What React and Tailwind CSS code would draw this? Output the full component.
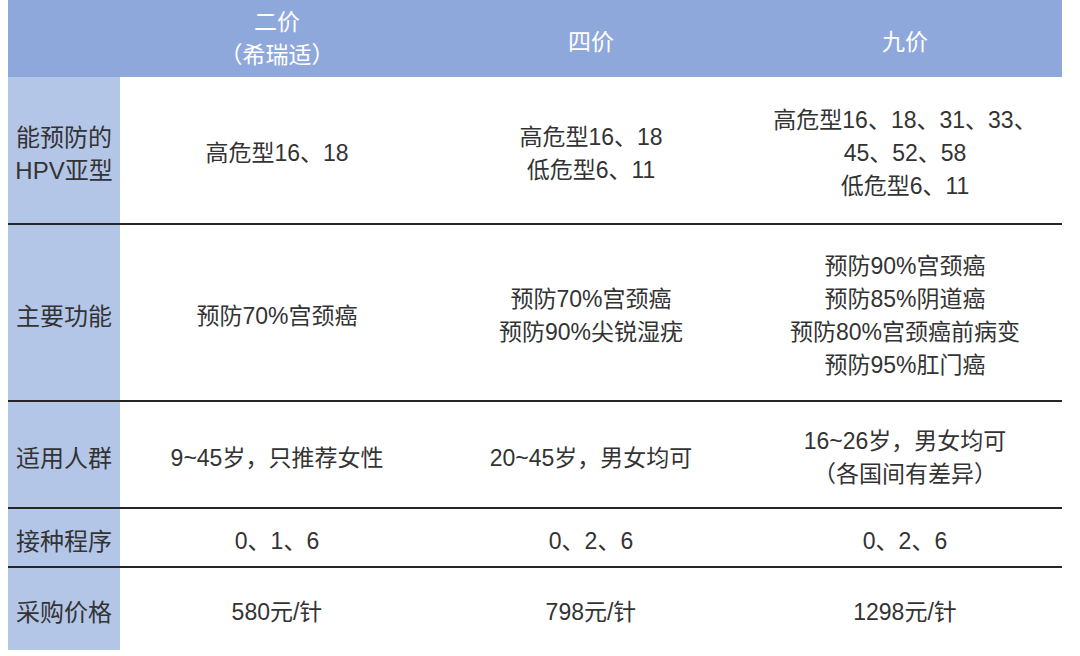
import React from 'react'

const rows = [
  {
    label: ['能预防的', 'HPV亚型'],
    h: 'h-[148px]',
    cells: [['高危型16、18'], ['高危型16、18', '低危型6、11'], ['高危型16、18、31、33、', '45、52、58', '低危型6、11']],
  },
  {
    label: ['主要功能'],
    h: 'h-[177px]',
    cells: [['预防70%宫颈癌'], ['预防70%宫颈癌', '预防90%尖锐湿疣'], ['预防90%宫颈癌', '预防85%阴道癌', '预防80%宫颈癌前病变', '预防95%肛门癌']],
  },
  {
    label: ['适用人群'],
    h: 'h-[107px]',
    cells: [['9~45岁，只推荐女性'], ['20~45岁，男女均可'], ['16~26岁，男女均可', '（各国间有差异）']],
  },
  {
    label: ['接种程序'],
    h: 'h-[59px]',
    cells: [['0、1、6'], ['0、2、6'], ['0、2、6']],
  },
  {
    label: ['采购价格'],
    h: 'h-[82px]',
    cells: [['580元/针'], ['798元/针'], ['1298元/针']],
    last: true,
  },
]

export default function App() {
  return (
    <div className="w-[1080px] h-[656px] bg-white pl-[8px] overflow-hidden"
      style={{ fontFamily: '"Liberation Sans", "Noto Sans CJK SC", sans-serif' }}>
      <div className="w-[1054px]">
        <div className="grid grid-cols-[112px_1fr_1fr_1fr] h-[77px] bg-[#8fa8dc] text-white text-[23px] leading-[33px]">
          <div></div>
          <div className="flex flex-col items-center justify-center">
            <span>二价</span>
            <span>（希瑞适）</span>
          </div>
          <div className="flex items-center justify-center pt-[7px]">四价</div>
          <div className="flex items-center justify-center pt-[7px]">九价</div>
        </div>
        {rows.map((r, i) => (
          <div key={i}
            className={`grid grid-cols-[112px_1fr_1fr_1fr] ${r.h} ${r.last ? '' : 'border-b-2 border-[#262626]'} leading-[33px] text-[#333333]`}>
            <div className="bg-[#b4c6e7] flex flex-col items-center justify-center pt-[7px] text-[24px]">
              {r.label.map((t, j) => <span key={j}>{t}</span>)}
            </div>
            {r.cells.map((c, k) => (
              <div key={k} className="flex flex-col items-center justify-center pt-[7px] text-[23px]">
                {c.map((t, j) => <span key={j}>{t}</span>)}
              </div>
            ))}
          </div>
        ))}
      </div>
    </div>
  )
}
